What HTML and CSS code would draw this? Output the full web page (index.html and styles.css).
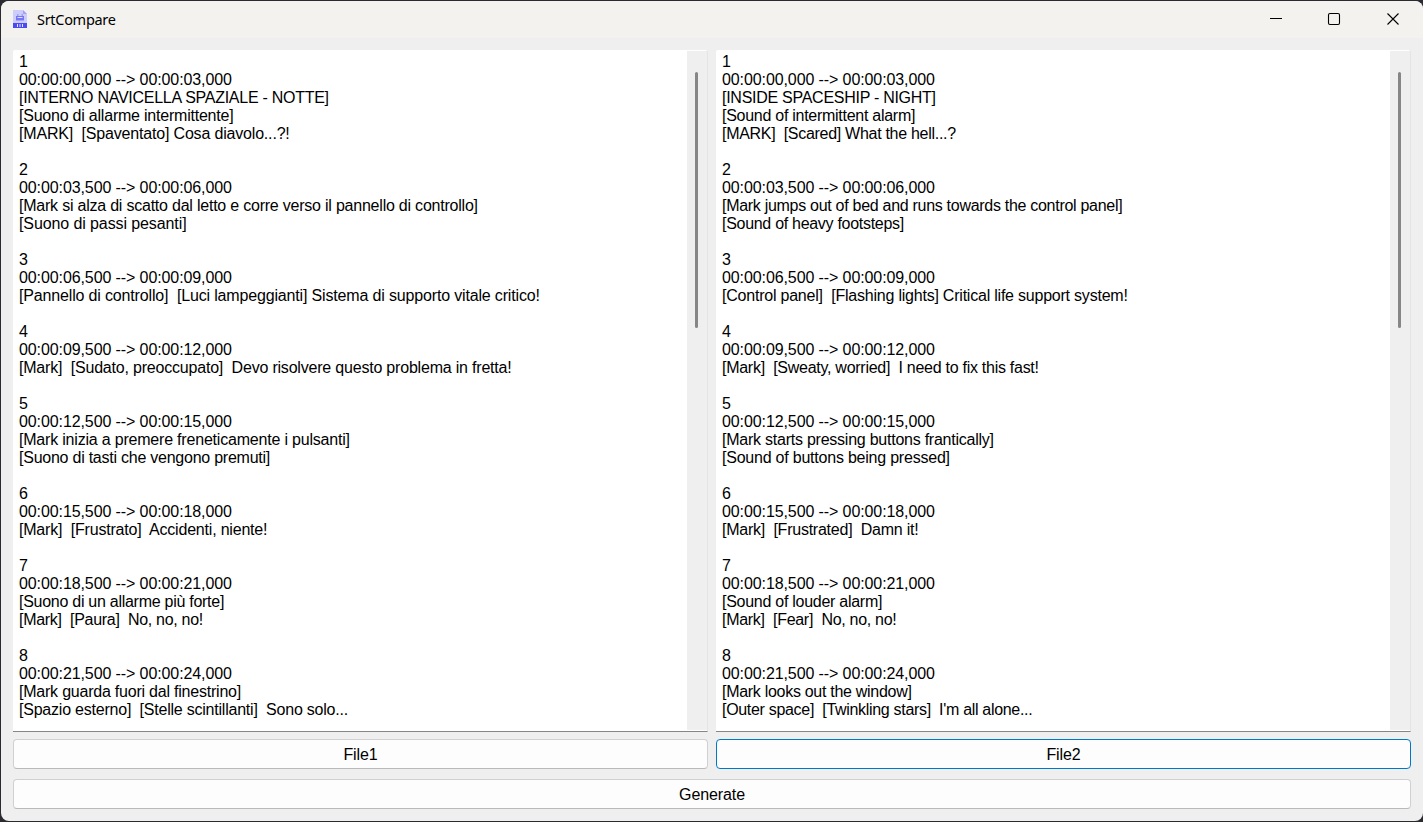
FILE: index.html
```html
<!DOCTYPE html>
<html lang="en">
<head>
<meta charset="utf-8">
<title>SrtCompare</title>
<link rel="stylesheet" href="styles.css">
</head>
<body>
<div class="window">
<header class="titlebar">
<svg class="app-icon" width="14" height="18" viewBox="0 0 14 18"><path d="M0 0h10L14 4V13H0z" fill="#cdcdfd"/><path d="M10 0 14 4H10z" fill="#a3a3f4"/><path d="M4 4.500h1.500v1H4zM8.500 4.500H10v1H8.500zM3 6h8v5H3z" fill="#7676f4"/><path d="M4.500 7.500h5" stroke="#dedeff"/><path d="M3 10h8v1H3z" fill="#a5a5fa"/><path d="M0 13h14v5H0z" fill="#4b4bf2"/><path d="M4.500 14v3M7 14v3M9.500 14v3" stroke="#e4e4ff"/></svg>
<h1 class="title">SrtCompare</h1>
<nav class="controls">
<svg width="12" height="12" viewBox="0 0 12 12"><path d="M1 5.500h12"/></svg>
<svg width="12" height="12" viewBox="0 0 12 12"><rect x="0.500" y="0.500" width="11" height="11" rx="1.500"/></svg>
<svg width="12" height="12" viewBox="0 0 12 12"><path d="M.5.5l11 11M11.500.5l-11 11"/></svg>
</nav>
</header>
<main class="content">
<div class="panes">
<section class="pane"><pre class="text">1
00:00:00,000 --&gt; 00:00:03,000
<span class="k27">[INTERNO NAVICELLA SPAZIALE - NOTTE]</span>
<span class="k22">[Suono di allarme intermittente]</span>
<span class="k18">[MARK]  [Spaventato] Cosa diavolo...?!</span>

2
00:00:03,500 --&gt; 00:00:06,000
<span class="k22">[Mark si alza di scatto dal letto e corre verso il pannello di controllo]</span>
<span>[Suono di passi pesanti]</span>

3
00:00:06,500 --&gt; 00:00:09,000
<span class="k16">[Pannello di controllo]  [Luci lampeggianti] Sistema di supporto vitale critico!</span>

4
00:00:09,500 --&gt; 00:00:12,000
<span class="k20">[Mark]  [Sudato, preoccupato]  Devo risolvere questo problema in fretta!</span>

5
00:00:12,500 --&gt; 00:00:15,000
<span class="k20">[Mark inizia a premere freneticamente i pulsanti]</span>
<span class="k24">[Suono di tasti che vengono premuti]</span>

6
00:00:15,500 --&gt; 00:00:18,000
<span class="k20">[Mark]  [Frustrato]  Accidenti, niente!</span>

7
00:00:18,500 --&gt; 00:00:21,000
<span class="k27">[Suono di un allarme più forte]</span>
<span class="k29">[Mark]  [Paura]  No, no, no!</span>

8
00:00:21,500 --&gt; 00:00:24,000
<span class="k22">[Mark guarda fuori dal finestrino]</span>
<span class="k22">[Spazio esterno]  [Stelle scintillanti]  Sono solo...</span></pre><div class="scroll"><div class="thumb"></div></div></section>
<section class="pane"><pre class="text">1
00:00:00,000 --&gt; 00:00:03,000
<span class="k27">[INSIDE SPACESHIP - NIGHT]</span>
<span class="k27">[Sound of intermittent alarm]</span>
<span class="k29">[MARK]  [Scared] What the hell...?</span>

2
00:00:03,500 --&gt; 00:00:06,000
<span class="k29">[Mark jumps out of bed and runs towards the control panel]</span>
<span class="k29">[Sound of heavy footsteps]</span>

3
00:00:06,500 --&gt; 00:00:09,000
<span class="k22">[Control panel]  [Flashing lights] Critical life support system!</span>

4
00:00:09,500 --&gt; 00:00:12,000
<span class="k27">[Mark]  [Sweaty, worried]  I need to fix this fast!</span>

5
00:00:12,500 --&gt; 00:00:15,000
<span class="k24">[Mark starts pressing buttons frantically]</span>
<span class="k22">[Sound of buttons being pressed]</span>

6
00:00:15,500 --&gt; 00:00:18,000
<span class="k24">[Mark]  [Frustrated]  Damn it!</span>

7
00:00:18,500 --&gt; 00:00:21,000
<span class="k27">[Sound of louder alarm]</span>
<span class="k29">[Mark]  [Fear]  No, no, no!</span>

8
00:00:21,500 --&gt; 00:00:24,000
<span class="k29">[Mark looks out the window]</span>
<span class="k31">[Outer space]  [Twinkling stars]  I'm all alone...</span></pre><div class="scroll"><div class="thumb"></div></div></section>
</div>
<div class="files"><button class="btn">File1</button><button class="btn focused">File2</button></div>
<button class="btn generate">Generate</button>
</main>
</div>
</body>
</html>
```
FILE: styles.css
```css
* { box-sizing: border-box; }
body { margin: 0; height: 822px; padding: 1px 0 1px 1px; overflow: hidden; background: #2b2a30; font-family: "Liberation Sans", Arial, sans-serif; color: #000; }
.window { height: 820px; border-radius: 8px; overflow: hidden; background: #efefef; }
.titlebar { display: flex; align-items: flex-start; height: 37px; padding: 0 24px 0 12px; background: #f3f2ef; }
.app-icon { display: block; margin-top: 9px; }
.title { margin: 8px 0 0 10px; font: 400 14.5px/20px "Noto Sans", sans-serif; letter-spacing: -0.3px; }
.controls { display: flex; gap: 47px; margin: 12px 0 0 auto; }
.controls svg { display: block; overflow: visible; fill: none; stroke: #000; stroke-width: 1.1; }
.content { display: flex; flex-direction: column; padding: 12px 12px 0; }
.panes, .files { display: grid; grid-template-columns: 695px 695px; column-gap: 8px; }
.pane { display: flex; justify-content: space-between; height: 682px; background: #fff; border-right: 1px solid #e4e4e4; border-bottom: 1px solid #868686; border-radius: 2px 2px 0 0; }
.text { margin: 0; padding: 3px 0 0 6px; font: 16px/18px "Liberation Sans", Arial, sans-serif; letter-spacing: -0.1px; white-space: pre; }
/* Tracking steps for the subtitle lines */
.k16 { letter-spacing: -0.16px; }
.k18 { letter-spacing: -0.18px; }
.k20 { letter-spacing: -0.2px; }
.k22 { letter-spacing: -0.22px; }
.k24 { letter-spacing: -0.24px; }
.k27 { letter-spacing: -0.27px; }
.k29 { letter-spacing: -0.29px; }
.k31 { letter-spacing: -0.31px; }
.scroll { width: 20px; height: 679px; margin: 1px 0 0; padding: 21px 0 0 8px; background: #efefef; }
.thumb { width: 3px; height: 256px; border-radius: 1.5px; background: #868686; }
.files { margin-top: 7px; }
.btn { display: block; height: 30px; padding: 1px 0 0; border: 1px solid #d0d0d0; border-bottom-color: #b9b9b9; border-radius: 4px; background: #fdfdfd; color: #000; font: 16px/27px "Liberation Sans", Arial, sans-serif; letter-spacing: -0.1px; }
.focused { border-color: #0078c8; }
.generate { width: 1398px; margin-top: 10px; }
```
